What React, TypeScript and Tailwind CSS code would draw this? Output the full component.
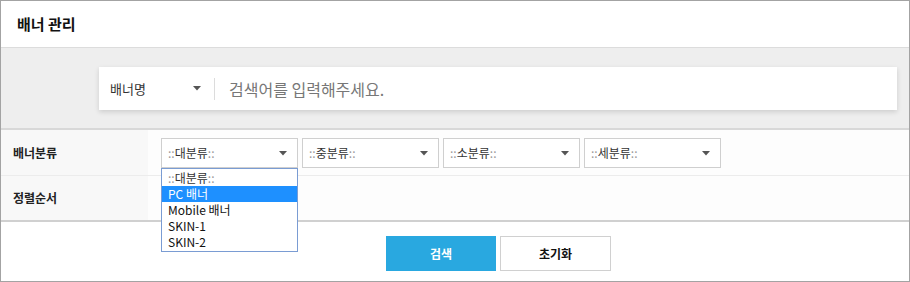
import React from "react";

const font = { fontFamily: '"Noto Sans CJK KR", "Noto Sans", sans-serif' };

function Arrow() {
  return (
    <svg width="8" height="5" viewBox="0 0 8 5" className="shrink-0">
      <path d="M0 0 H8 L4 4.5 Z" fill="#555" />
    </svg>
  );
}

function Sel({ label }: { label: string }) {
  return (
    <div className="w-[137px] h-[30px] border border-[#cfcfcf] bg-white flex items-center justify-between pl-[6px] pr-[10px] text-[12px] text-[#333]">
      <span>
        <span className="text-[#999]">::</span>
        {label}
        <span className="text-[#999]">::</span>
      </span>
      <Arrow />
    </div>
  );
}

export default function App() {
  const items = ["::대분류::", "PC 배너", "Mobile 배너", "SKIN-1", "SKIN-2"];
  return (
    <div
      className="w-[910px] h-[282px] border border-[#a3a3a3] bg-white flex flex-col text-[#222]"
      style={font}
    >
      <div className="h-[47px] shrink-0 flex items-center pl-[16px] border-b border-[#dcdcdc] text-[15px] font-bold text-[#111]">
        배너 관리
      </div>
      <div className="h-[82px] shrink-0 bg-[#eeeeee] border-b-2 border-[#d8d8d8] pl-[98px] pr-[12px] pt-[19px]">
        <div className="h-[43px] bg-white flex items-center shadow-[0_2px_5px_rgba(0,0,0,0.14)]">
          <div className="w-[110px] pl-[11px] pr-[8px] flex items-center justify-between text-[13px] text-[#333]">
            <span>배너명</span>
            <Arrow />
          </div>
          <div className="w-px h-[22px] bg-[#dcdcdc] ml-[5px]" />
          <div className="pl-[14px] text-[16px] text-[#777]">검색어를 입력해주세요.</div>
        </div>
      </div>
      <div className="flex h-[46px] shrink-0 border-b border-[#ececec]">
        <div className="w-[147px] bg-[#f8f8f8] pl-[12px] flex items-center text-[12px] font-bold text-[#222]">
          배너분류
        </div>
        <div className="flex-1 bg-[#fdfdfd] pl-[13px] pt-[8px] flex gap-[4px]">
          <div className="relative">
            <Sel label="대분류" />
            <div className="absolute left-0 top-[30px] w-[137px] border border-[#7a9cd3] bg-white z-10 text-[12px] leading-[15px] text-[#111] py-[1px]">
              {items.map((it, i) => (
                <div
                  key={it}
                  className={
                    i === 1
                      ? "px-[6px] h-[16px] bg-[#1e90ff] text-white"
                      : i === 0
                      ? "px-[6px] h-[16px] text-[#333]"
                      : "px-[6px] h-[16px]"
                  }
                >
                  {i === 0 ? (
                    <>
                      <span className="text-[#999]">::</span>대분류<span className="text-[#999]">::</span>
                    </>
                  ) : (
                    it
                  )}
                </div>
              ))}
            </div>
          </div>
          <Sel label="중분류" />
          <Sel label="소분류" />
          <Sel label="세분류" />
        </div>
      </div>
      <div className="flex h-[46px] shrink-0 border-b-2 border-[#d0d0d0]">
        <div className="w-[147px] bg-[#f8f8f8] pl-[12px] flex items-center text-[12px] font-bold text-[#222]">
          정렬순서
        </div>
        <div className="flex-1 bg-[#fdfdfd]" />
      </div>
      <div className="flex-1 flex pl-[385px] pt-[14px] gap-[4px]">
        <button className="w-[110px] h-[35px] bg-[#29a8e0] text-white text-[12px] font-bold">
          검색
        </button>
        <button className="w-[111px] h-[35px] bg-white border border-[#d0d0d0] text-[#111] text-[12px] font-bold">
          초기화
        </button>
      </div>
    </div>
  );
}
